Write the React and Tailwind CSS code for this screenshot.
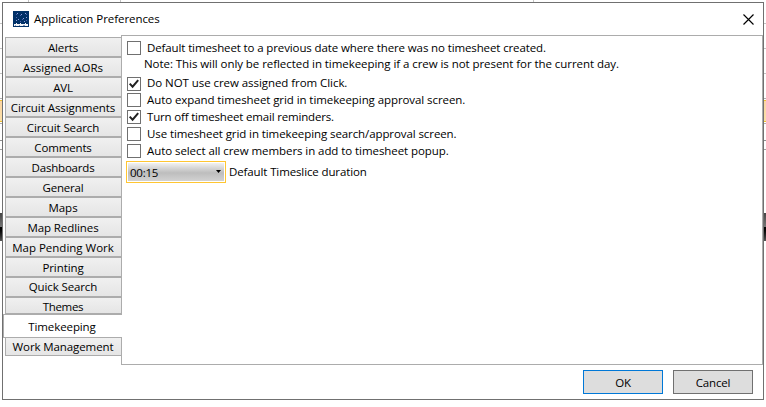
const tabs = [
  { name: 'Alerts', size: 'h-5 pt-[2px]', track: 'tracking-[-0.15px]' },
  { name: 'Assigned AORs', size: 'h-5 pt-[2px]', track: 'tracking-[0.03px]' },
  { name: 'AVL', size: 'h-5 pt-[2px]', track: 'tracking-[-0.15px]' },
  { name: 'Circuit Assignments', size: 'h-5 pt-[2px]', track: 'tracking-[-0.05px]' },
  { name: 'Circuit Search', size: 'h-5 pt-[2px]', track: 'tracking-[-0.1px]' },
  { name: 'Comments', size: 'h-5 pt-[2px]', track: 'tracking-[-0.15px]' },
  { name: 'Dashboards', size: 'h-5 pt-[2px]', track: 'tracking-[-0.2px]' },
  { name: 'General', size: 'h-5 pt-[2px]', track: 'tracking-[-0.2px]' },
  { name: 'Maps', size: 'h-5 pt-[2px]', track: 'tracking-[0px]' },
  { name: 'Map Redlines', size: 'h-5 pt-[2px]', track: 'tracking-[-0.08px]' },
  { name: 'Map Pending Work', size: 'h-5 pt-[2px]', track: 'tracking-[0px]' },
  { name: 'Printing', size: 'h-5 pt-[2px]', track: 'tracking-[-0.08px]' },
  { name: 'Quick Search', size: 'h-5', track: 'tracking-[-0.12px]' },
  { name: 'Themes', size: 'h-[17px] pt-[2px]', track: 'tracking-[-0.3px]' },
  { name: 'Timekeeping', active: true, track: 'tracking-[-0.1px]' },
  { name: 'Work Management', size: 'h-[18px] border-t-0 pt-[1px]', track: 'tracking-[-0.1px]' },
];

const options = [
  { text: 'Do NOT use crew assigned from Click.', checked: true, row: 'h-4', track: '-mt-px tracking-[-0.06px]' },
  { text: 'Auto expand timesheet grid in timekeeping approval screen.', row: 'h-[17px]', track: 'tracking-[-0.08px]' },
  { text: 'Turn off timesheet email reminders.', checked: true, row: 'h-[17px]', track: 'tracking-[-0.18px]' },
  { text: 'Use timesheet grid in timekeeping search/approval screen.', row: 'h-[17px]', track: 'tracking-[-0.09px]' },
  { text: 'Auto select all crew members in add to timesheet popup.', row: 'h-[17px]', track: 'tracking-[-0.07px]' },
];

function Option({ text, checked, row, track }) {
  return (
    <label className={`${row} flex items-start gap-[6px]`}>
      <span className="mt-px flex h-[14px] w-[14px] shrink-0 items-center justify-center border border-[#707070] bg-white">
        {checked && (
          <svg width="12" height="12" viewBox="0 0 12 12" fill="none" stroke="#212121" strokeWidth="2">
            <path d="M1.7 5.6 4.6 8.7 10.2 2.2" />
          </svg>
        )}
      </span>
      <span className={track}>{text}</span>
    </label>
  );
}

// Sliver of the parent window that shows beside the dialog.
function EdgeStrip() {
  return (
    <div className="flex h-[398px] w-[2px] shrink-0 flex-col">
      <div className="h-[22px] border-b border-[#c4c4c4]" />
      <div className="h-[25px] border-b border-[#c4c4c4]" />
      <div className="h-[25px] border-b border-[#c4c4c4]" />
      <div className="h-[25px] border-b border-[#b0b0b0]" />
      <div className="mt-px h-[22px] border-y border-[#f0c030] bg-linear-to-b from-[#fcd6a4] to-[#fbe0a8]" />
      <div className="h-[2px] border-b border-[#b0b0b0]" />
      <div className="h-[17px] border-b border-[#909090]" />
      <div className="h-[9px] border-b border-[#a0a0a0]" />
      <div className="h-[63px]" />
      <div className="h-[14px] bg-linear-to-b from-[#444] to-[#777]" />
      <div className="h-[14px] bg-linear-to-b from-black to-[#555]" />
    </div>
  );
}

export default function App() {
  return (
    <div className="flex h-[407px] w-[766px] flex-col overflow-hidden bg-white font-['Open_Sans','Noto_Sans',sans-serif] text-[11.5px] leading-[16px] whitespace-nowrap text-black">
      <div className="flex h-[2px] shrink-0">
        <div className="w-[29px] border-r border-[#c4c4c4]" />
        <div className="w-[92px] border-r border-[#c4c4c4]" />
        <div className="w-[413px] border-r border-[#c4c4c4]" />
      </div>
      <div className="flex">
        <EdgeStrip />
        <div className="flex h-[398px] w-[762px] shrink-0 flex-col border border-[#707070] bg-white">
          <header className="flex h-8 shrink-0 items-center pr-[9px] pl-[10px]">
            <svg width="16" height="16" viewBox="0 0 16 16" shapeRendering="crispEdges">
              <path fill="#003067" d="M0 0h16v16H0z" />
              <path fill="#8fa0e0" d="M4 2h1v1H4zM8 3h1v1H8zM12 2h1v1h-1zM5 8h1v1H5zM10 7h1v1h-1zM13 6h1v1h-1zM3 9h1v1H3zM11 10h1v1h-1z" />
              <path fill="#4d5fae" d="M3 3h1v1H3zM7 4h1v1H7zM13 3h1v1h-1zM3 6h1v1H3zM9 8h1v1H9zM13 9h1v1h-1zM7 10h1v1H7z" />
              <path fill="#f2f4f8" d="M1 13h2v-1h1v1h3v-1h1v1h4v-1h1v1h2v2H1z" />
              <path fill="#8796b5" d="M2 14h1v1H2zM6 14h1v1H6zM10 14h2v1h-2z" />
            </svg>
            <h1 className="ml-[5px] flex-1 tracking-[-0.06px]">Application Preferences</h1>
            <svg width="11" height="11" viewBox="0 0 11 11" stroke="#000" strokeWidth="1.15">
              <path d="M.5 .5 10.5 10.5M10.5 .5 .5 10.5" />
            </svg>
          </header>
          <div className="flex h-[330px] shrink-0">
            <nav className="flex w-[118px] shrink-0 flex-col pt-[2px]">
              {tabs.map(({ name, size, active, track }) =>
                active ? (
                  <div key={name} className="relative -mr-px flex h-6 shrink-0 items-center justify-center border-y border-l border-[#acacac] bg-white pt-[2px] pr-[2px]">
                    <span className={track}>{name}</span>
                  </div>
                ) : (
                  <div key={name} className={`${size} ml-[2px] flex shrink-0 items-center justify-center border border-r-0 border-[#acacac] bg-linear-to-b from-[#f0f0f0] to-[#e5e5e5] pr-px`}>
                    <span className={track}>{name}</span>
                  </div>
                )
              )}
            </nav>
            <main className="h-[330px] w-[642px] border border-[#acacac] pt-[4px] pl-[5px]">
              <Option
                text="Default timesheet to a previous date where there was no timesheet created."
                row="h-[17px]"
                track="tracking-[-0.12px]"
              />
              <p className="-mt-px mb-[4px] pl-[17px] tracking-[-0.06px]">
                Note: This will only be reflected in timekeeping if a crew is not present for the current day.
              </p>
              {options.map((o) => (
                <Option key={o.text} {...o} />
              ))}
              <div className="mt-px -ml-px flex items-center gap-[3px]">
                <div className="h-[22px] w-[100px] border border-[#ffc632] p-px">
                  <div className="flex h-[18px] items-center justify-between bg-linear-to-b from-[#f2f2f2] from-0% via-[#bdbdbd] via-55% to-[#d2d2d2] pt-px pr-[3px] pl-[2px]">
                    <span className="tracking-[-0.25px]">00:15</span>
                    <svg width="5" height="3" viewBox="0 0 5 3" className="mb-[2px]">
                      <path d="M0 0h5L2.5 3z" />
                    </svg>
                  </div>
                </div>
                <span className="-mt-px tracking-[-0.12px]">Default Timeslice duration</span>
              </div>
            </main>
          </div>
          <footer className="flex justify-end gap-[10px] pt-[5px] pr-[10px] tracking-[-0.15px]">
            <button className="h-6 w-20 border border-[#0078d7] bg-[#ddd] pt-px">OK</button>
            <button className="h-6 w-20 border border-[#707070] bg-[#ddd] pt-px">Cancel</button>
          </footer>
        </div>
        <EdgeStrip />
      </div>
    </div>
  );
}
